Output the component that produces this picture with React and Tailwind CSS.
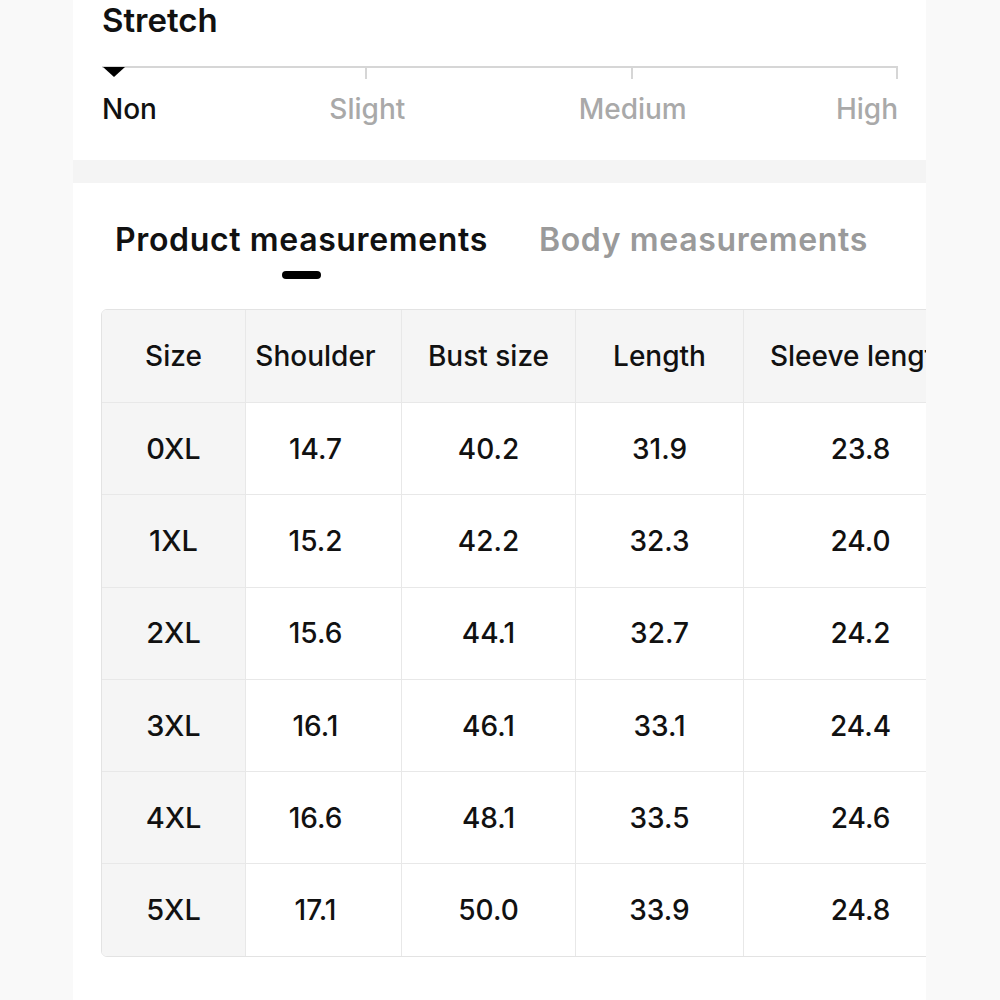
import React from "react";

const rows = [
  ["0XL", "14.7", "40.2", "31.9", "23.8"],
  ["1XL", "15.2", "42.2", "32.3", "24.0"],
  ["2XL", "15.6", "44.1", "32.7", "24.2"],
  ["3XL", "16.1", "46.1", "33.1", "24.4"],
  ["4XL", "16.6", "48.1", "33.5", "24.6"],
  ["5XL", "17.1", "50.0", "33.9", "24.8"],
];

const headers = ["Size", "Shoulder", "Bust size", "Length", "Sleeve length"];
const widths = ["w-[144px]", "w-[156px]", "w-[174px]", "w-[168px]", "w-[234px]"];
const offsets = ["", "pr-4", "", "", ""];

function Cell({ i, children, head }) {
  const gray = head || i === 0;
  return (
    <div
      className={`${widths[i]} shrink-0 ${head ? "h-[92px]" : "h-[91.3px]"} flex items-center justify-center border-r border-[#e8e8e8] ${offsets[i]} ${
        gray ? "bg-[#f5f5f5]" : "bg-white"
      }`}
    >
      {children}
    </div>
  );
}

export default function App() {
  return (
    <div
      className="min-h-screen bg-[#f9f9f9] text-[#111]"
      style={{ fontFamily: "Inter, 'Noto Sans', sans-serif" }}
    >
      <div className="ml-[73px] w-[853px] bg-white overflow-hidden min-h-screen">
        {/* stretch */}
        <div className="h-[160px] px-[29px] pt-[2px]">
          <h2 className="text-[33px] leading-[36px] font-semibold">Stretch</h2>
          <div className="relative mt-[28px] w-[796px]">
            <div className="grid grid-cols-3 h-[13px] border-t-2 border-[#d6d6d6]">
              <div className="border-r-2 border-[#d6d6d6]" />
              <div className="border-r-2 border-[#d6d6d6]" />
              <div className="border-r-2 border-[#d6d6d6]" />
            </div>
            <svg className="absolute left-[1px] top-[1px]" width="22" height="10" viewBox="0 0 22 10">
              <path d="M0 0 H22 L11 10 Z" fill="#000" />
            </svg>
          </div>
          <div className="grid grid-cols-6 w-[796px] mt-[13px] text-[28px] leading-[34px] font-medium text-[#a9a9a9]">
            <span className="text-[#111] text-left">Non</span>
            <span className="col-span-2 text-center">Slight</span>
            <span className="col-span-2 text-center">Medium</span>
            <span className="text-right">High</span>
          </div>
        </div>
        <div className="h-[23px] bg-[#f4f4f4]" />

        {/* tabs */}
        <div className="flex gap-[51px] pl-[42px] pt-[37px]">
          <div className="flex flex-col items-center">
            <span className="text-[32px] leading-[40px] font-semibold tracking-[0.02em]">Product measurements</span>
            <span className="mt-[11px] w-[39px] h-[8px] rounded-full bg-black" />
          </div>
          <span className="text-[32px] leading-[40px] font-semibold tracking-[0.02em] text-[#9a9a9a]">Body measurements</span>
        </div>

        {/* table */}
        <div className="ml-[28px] mt-[30px] w-[877px] border border-[#e3e3e3] rounded-[6px] overflow-hidden text-[28px] font-medium">
          <div className="flex border-b border-[#e8e8e8]">
            {headers.map((h, i) => (
              <Cell key={h} i={i} head>
                <span className="whitespace-nowrap">{h}</span>
              </Cell>
            ))}
          </div>
          {rows.map((r, ri) => (
            <div
              key={r[0]}
              className={`flex ${ri < rows.length - 1 ? "border-b border-[#e8e8e8]" : ""}`}
            >
              {r.map((v, i) => (
                <Cell key={i} i={i}>
                  <span className={i === 0 ? "text-[29px]" : ""}>{v}</span>
                </Cell>
              ))}
            </div>
          ))}
        </div>
      </div>
    </div>
  );
}
